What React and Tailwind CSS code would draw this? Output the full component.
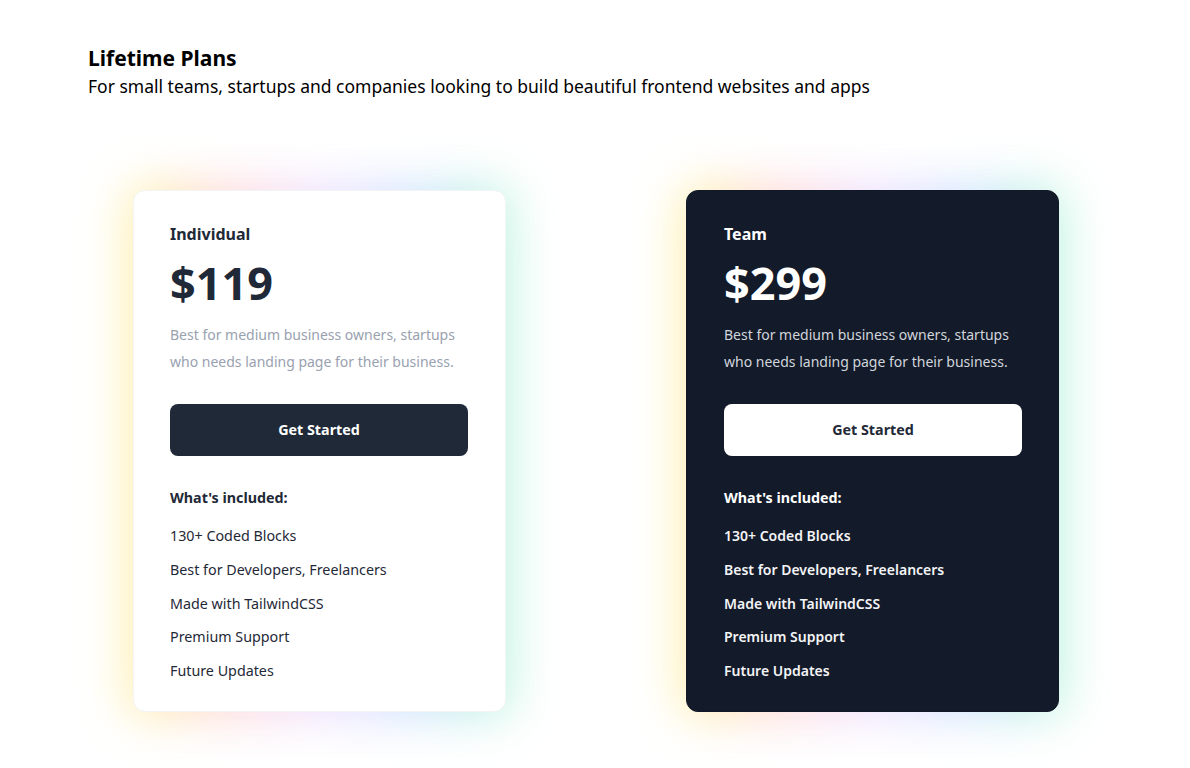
import React from 'react';

const features = [
  '130+ Coded Blocks',
  'Best for Developers, Freelancers',
  'Made with TailwindCSS',
  'Premium Support',
  'Future Updates',
];

const plans = [
  { name: 'Individual', price: '$119', dark: false },
  { name: 'Team', price: '$299', dark: true },
];

function PlanCard({ plan }) {
  const { dark } = plan;
  return (
    <div className="relative w-[373px]">
      {/* rainbow glow */}
      <div className="absolute -inset-1 rounded-2xl bg-[linear-gradient(90deg,#fef08a,#fecaca,#e9d5ff,#bfdbfe,#a7f3d0)] opacity-80 blur-xl" />
      <div
        className={
          dark
            ? 'relative rounded-xl border border-[#111827] bg-[#131a29] pl-[37px] pr-[36px] pt-[31px] pb-[28px]'
            : 'relative rounded-xl border border-gray-100 bg-white pl-[36px] pr-[37px] pt-[31px] pb-[28px]'
        }
      >
        <h3 className={dark ? 'text-[16px] font-bold leading-6 text-white' : 'text-[16px] font-bold leading-6 text-[#1f2937]'}>
          {plan.name}
        </h3>
        <p className={dark ? 'mt-[7px] text-[45px] font-bold leading-[60px] text-white' : 'mt-[7px] text-[45px] font-bold leading-[60px] text-[#1f2937]'}>
          {plan.price}
        </p>
        <p className={dark ? 'mt-[8px] text-[14px] leading-[27px] text-gray-300' : 'mt-[8px] text-[14px] leading-[27px] text-gray-400'}>
          Best for medium business owners, startups
          <br />
          who needs landing page for their business.
        </p>
        <button
          type="button"
          className={
            dark
              ? 'mt-[29px] h-[52px] w-full rounded-lg bg-white text-[14.3px] font-bold text-[#1f2937]'
              : 'mt-[29px] h-[52px] w-full rounded-lg bg-[#1f2937] text-[14.3px] font-bold text-white'
          }
        >
          Get Started
        </button>
        <p className={dark ? 'mt-[30px] text-[14.3px] font-bold leading-6 text-white' : 'mt-[30px] text-[14.3px] font-bold leading-6 text-[#1f2937]'}>
          What's included:
        </p>
        <ul className="mt-[14px] flex flex-col gap-[9.75px]">
          {features.map((f) => (
            <li
              key={f}
              className={dark ? 'text-[14px] font-semibold leading-6 text-gray-100' : 'text-[14.3px] leading-6 text-[#1f2937]'}
            >
              {f}
            </li>
          ))}
        </ul>
      </div>
    </div>
  );
}

export default function App() {
  return (
    <div className="min-h-screen bg-white font-['Noto_Sans',sans-serif] text-black">
      <div className="pl-[88px] pt-[44px]">
        <h1 className="text-[21px] font-bold leading-7">Lifetime Plans</h1>
        <p className="text-[17.5px] leading-7">
          For small teams, startups and companies looking to build beautiful frontend websites and apps
        </p>
      </div>
      <div className="mt-[90px] flex gap-[180px] pl-[133px]">
        {plans.map((p) => (
          <PlanCard key={p.name} plan={p} />
        ))}
      </div>
    </div>
  );
}
